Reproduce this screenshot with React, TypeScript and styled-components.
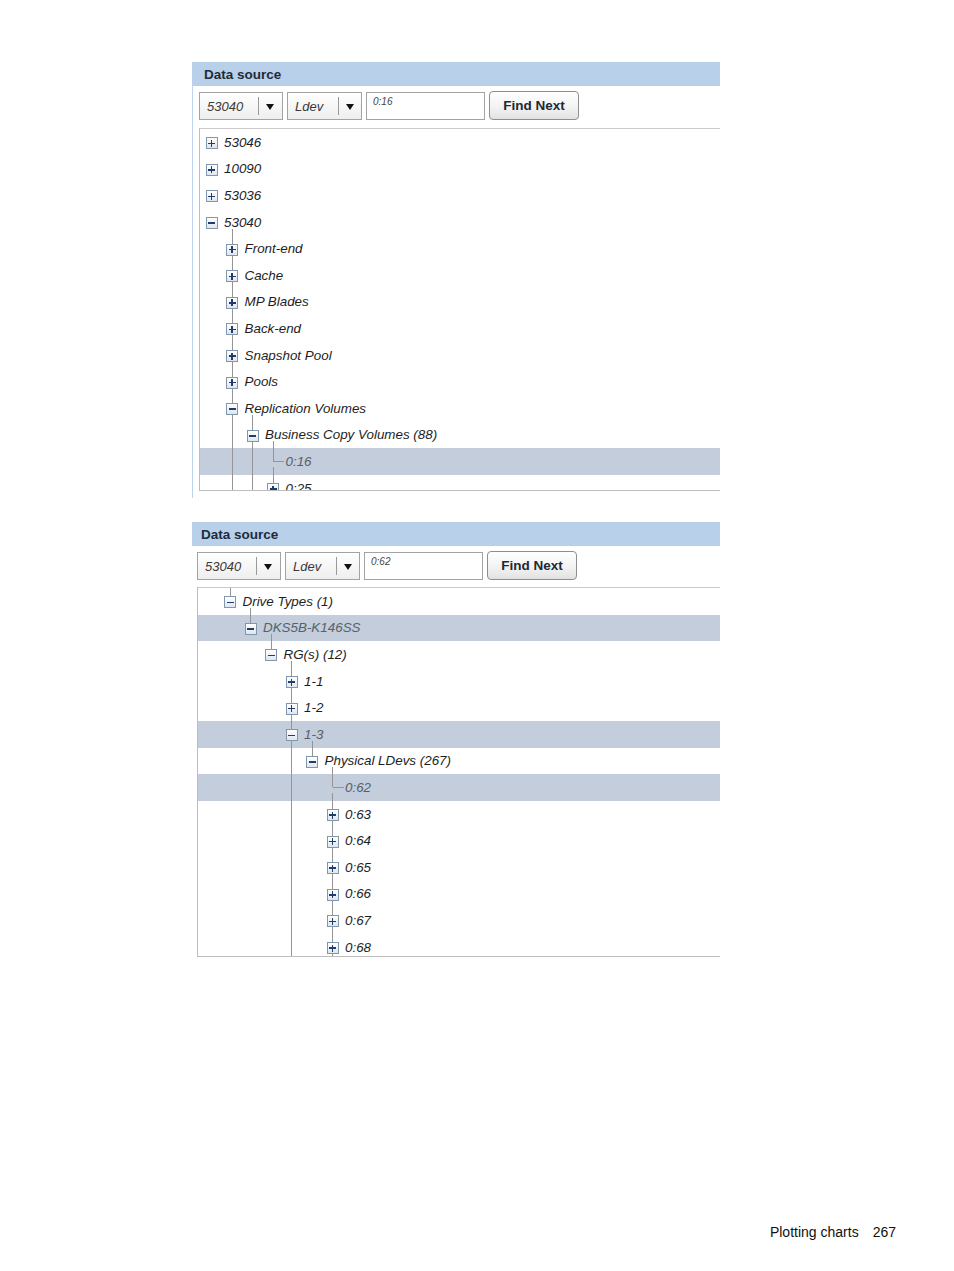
import React from "react";
import styled, { createGlobalStyle, css } from "styled-components";

const GlobalStyle = createGlobalStyle`
  html, body { margin: 0; padding: 0; background: #ffffff; }
  body { font-family: "Liberation Sans", Arial, sans-serif; }
  * { box-sizing: border-box; }
`;

const W = 20.5;
const H = 26.6;
const C = H / 2;
const ICON = 12;
const col = (d: number) => 11.5 + d * W;

type Seg =
  | { kind: "v"; x: number; from: number; to: number }
  | { kind: "h"; x: number; y: number; w: number };

const up = (d: number): Seg => ({ kind: "v", x: col(d), from: 0, to: C - ICON / 2 + 1 });
const down = (d: number): Seg => ({ kind: "v", x: col(d), from: C + ICON / 2, to: H });
const full = (d: number): Seg => ({ kind: "v", x: col(d), from: 0, to: H });
const stub = (d: number): Seg => ({ kind: "v", x: col(d), from: C + 6.5, to: H });
const elbowV = (d: number): Seg => ({ kind: "v", x: col(d), from: 0, to: C });
const elbowH = (d: number): Seg => ({ kind: "h", x: col(d), y: C, w: 11 });
const after = (d: number): Seg => ({ kind: "v", x: col(d), from: C + 6, to: H });

type Kind = "plus" | "minus" | "leaf";
interface Node {
  d: number;
  k: Kind;
  label: string;
  sel?: boolean;
  segs: Seg[];
}

const tree1: Node[] = [
  { d: 0, k: "plus", label: "53046", segs: [] },
  { d: 0, k: "plus", label: "10090", segs: [] },
  { d: 0, k: "plus", label: "53036", segs: [] },
  { d: 0, k: "minus", label: "53040", segs: [stub(1)] },
  ...["Front-end", "Cache", "MP Blades", "Back-end", "Snapshot Pool", "Pools"].map(
    (l): Node => ({ d: 1, k: "plus", label: l, segs: [up(1), down(1)] })
  ),
  { d: 1, k: "minus", label: "Replication Volumes", segs: [up(1), down(1), stub(2)] },
  { d: 2, k: "minus", label: "Business Copy Volumes (88)", segs: [full(1), up(2), down(2), stub(3)] },
  { d: 3, k: "leaf", label: "0:16", sel: true, segs: [full(1), full(2), elbowV(3), elbowH(3), after(3)] },
  { d: 3, k: "plus", label: "0:25", segs: [full(1), full(2), up(3), down(3)] },
];

const tree2: Node[] = [
  { d: 1, k: "minus", label: "Drive Types (1)", segs: [up(1), stub(2)] },
  { d: 2, k: "minus", label: "DKS5B-K146SS", sel: true, segs: [up(2), stub(3)] },
  { d: 3, k: "minus", label: "RG(s) (12)", segs: [up(3), stub(4)] },
  { d: 4, k: "plus", label: "1-1", segs: [up(4), down(4)] },
  { d: 4, k: "plus", label: "1-2", segs: [up(4), down(4)] },
  { d: 4, k: "minus", label: "1-3", sel: true, segs: [up(4), down(4), stub(5)] },
  { d: 5, k: "minus", label: "Physical LDevs (267)", segs: [full(4), up(5), stub(6)] },
  { d: 6, k: "leaf", label: "0:62", sel: true, segs: [full(4), elbowV(6), elbowH(6), after(6)] },
  ...["0:63", "0:64", "0:65", "0:66", "0:67", "0:68"].map(
    (l): Node => ({ d: 6, k: "plus", label: l, segs: [full(4), up(6), down(6)] })
  ),
];

/* ---------- layout ---------- */

const Page = styled.div`
  width: 954px;
  height: 1271px;
  display: flex;
  flex-direction: column;
  padding: 62px 0 31px 192px;
`;

const Panel = styled.section<{ $gapAfter?: number }>`
  width: 528px;
  margin-bottom: ${(p) => p.$gapAfter ?? 0}px;
`;

const Header = styled.div<{ $pad: number }>`
  height: 24px;
  background: #b9d0ea;
  display: flex;
  align-items: center;
  padding-left: ${(p) => p.$pad}px;
  font-weight: bold;
  font-size: 13.5px;
  color: #1d2c3c;
  padding-top: 1px;
`;

const Body = styled.div<{ $rail: boolean; $pad: number; $bottom: number }>`
  padding-left: ${(p) => p.$pad}px;
  padding-top: 6px;
  padding-bottom: ${(p) => p.$bottom}px;
  ${(p) =>
    p.$rail &&
    css`
      border-left: 1px solid #bdd3ee;
    `}
`;

const Toolbar = styled.div<{ $gap: number }>`
  display: flex;
  align-items: flex-start;
  gap: 4px;
  height: 29px;
  margin-bottom: ${(p) => p.$gap}px;
`;

const Combo = styled.div<{ $w: number }>`
  width: ${(p) => p.$w}px;
  height: 28px;
  border: 1px solid #a3a3a3;
  background: linear-gradient(#ffffff, #eeeeee);
  display: flex;
  align-items: center;
  font-style: italic;
  font-size: 13px;
  color: #3a3a3a;
  padding-left: 7px;
`;

const ComboText = styled.span<{ $w: number }>`
  width: ${(p) => p.$w}px;
`;

const ComboDivider = styled.span`
  width: 1px;
  height: 18px;
  background: #9a9a9a;
`;

const Arrow = styled.span`
  margin-left: 7px;
  width: 0;
  height: 0;
  border-left: 4px solid transparent;
  border-right: 4px solid transparent;
  border-top: 6px solid #111;
  margin-top: 2px;
`;

const Input = styled.div`
  width: 119px;
  height: 28px;
  border: 1px solid #a3a3a3;
  background: #fff;
  font-style: italic;
  font-size: 10px;
  color: #444;
  padding: 3px 0 0 6px;
`;

const Button = styled.div`
  width: 90px;
  height: 29px;
  margin-top: -1px;
  border: 1px solid #8e8e8e;
  border-radius: 4px;
  background: linear-gradient(#ffffff 0%, #f3f3f3 55%, #e2e2e2 100%);
  display: flex;
  align-items: center;
  justify-content: center;
  font-weight: bold;
  font-size: 13.5px;
  color: #202a33;
`;

const TreeBox = styled.div<{ $h: number }>`
  height: ${(p) => p.$h}px;
  border-top: 1px solid #cacaca;
  border-left: 1px solid #bdbdbd;
  border-bottom: 1px solid #bdbdbd;
  overflow: hidden;
`;

const Row = styled.div<{ $d: number; $sel?: boolean }>`
  position: relative;
  height: ${H}px;
  display: flex;
  align-items: center;
  padding-left: ${(p) => p.$d * W}px;
  background: ${(p) => (p.$sel ? "#c3cddb" : "transparent")};
  font-style: italic;
  font-size: 13.4px;
  color: ${(p) => (p.$sel ? "#57616c" : "#1e1e1e")};
`;

const VLine = styled.span<{ $x: number; $from: number; $to: number }>`
  position: absolute;
  left: ${(p) => p.$x - 0.5}px;
  top: ${(p) => p.$from}px;
  height: ${(p) => p.$to - p.$from}px;
  width: 1px;
  background: #959595;
`;

const HLine = styled.span<{ $x: number; $y: number; $w: number }>`
  position: absolute;
  left: ${(p) => p.$x}px;
  top: ${(p) => p.$y - 0.5}px;
  width: ${(p) => p.$w}px;
  height: 1px;
  background: #959595;
`;

const NodeCell = styled.span`
  width: 23px;
  height: 100%;
  display: flex;
  align-items: center;
  justify-content: center;
  position: relative;
  z-index: 1;
`;

const Toggle = styled.span<{ $kind: Kind }>`
  position: relative;
  width: ${ICON}px;
  height: ${ICON}px;
  margin-top: 2px;
  border: 1px solid #8397ac;
  background: linear-gradient(#ffffff, #dfe6ee);
  &::before {
    content: "";
    position: absolute;
    left: 1.5px;
    right: 1.5px;
    top: 4.25px;
    height: 1.5px;
    background: #1d3e6c;
  }
  ${(p) =>
    p.$kind === "plus" &&
    css`
      &::after {
        content: "";
        position: absolute;
        top: 1.5px;
        bottom: 1.5px;
        left: 4.25px;
        width: 1.5px;
        background: #1d3e6c;
      }
    `}
`;

const Label = styled.span`
  margin-left: 1px;
  white-space: nowrap;
  position: relative;
  z-index: 1;
`;

const Footer = styled.footer`
  margin-top: auto;
  align-self: flex-end;
  margin-right: 58px;
  display: flex;
  gap: 14px;
  font-family: "Liberation Sans", Arial, sans-serif;
  font-size: 14px;
  line-height: 16px;
  color: #111;
`;

/* ---------- components ---------- */

function Tree({ nodes, height }: { nodes: Node[]; height: number }) {
  return (
    <TreeBox $h={height}>
      {nodes.map((n, i) => (
        <Row key={i} $d={n.d} $sel={n.sel}>
          {n.segs.map((s, j) =>
            s.kind === "v" ? (
              <VLine key={j} $x={s.x} $from={s.from} $to={s.to} />
            ) : (
              <HLine key={j} $x={s.x} $y={s.y} $w={s.w} />
            )
          )}
          <NodeCell>{n.k !== "leaf" && <Toggle $kind={n.k} />}</NodeCell>
          <Label>{n.label}</Label>
        </Row>
      ))}
    </TreeBox>
  );
}

function DataSource({
  search,
  nodes,
  treeHeight,
  rail,
  headerPad,
  bodyPad,
  bottom,
  toolGap,
  gapAfter,
}: {
  search: string;
  nodes: Node[];
  treeHeight: number;
  rail: boolean;
  headerPad: number;
  bodyPad: number;
  bottom: number;
  toolGap: number;
  gapAfter?: number;
}) {
  return (
    <Panel $gapAfter={gapAfter}>
      <Header $pad={headerPad}>Data source</Header>
      <Body $rail={rail} $pad={bodyPad} $bottom={bottom}>
        <Toolbar $gap={toolGap}>
          <Combo $w={84}>
            <ComboText $w={51}>53040</ComboText>
            <ComboDivider />
            <Arrow />
          </Combo>
          <Combo $w={75}>
            <ComboText $w={43}>Ldev</ComboText>
            <ComboDivider />
            <Arrow />
          </Combo>
          <Input>{search}</Input>
          <Button>Find Next</Button>
        </Toolbar>
        <Tree nodes={nodes} height={treeHeight} />
      </Body>
    </Panel>
  );
}

export default function App() {
  return (
    <>
      <GlobalStyle />
      <Page>
        <DataSource
          search="0:16"
          nodes={tree1}
          treeHeight={363}
          rail
          headerPad={12}
          bodyPad={6}
          bottom={7}
          toolGap={7}
          gapAfter={24}
        />
        <DataSource
          search="0:62"
          nodes={tree2}
          treeHeight={370}
          rail={false}
          headerPad={9}
          bodyPad={5}
          bottom={0}
          toolGap={6}
        />
        <Footer>
          <span>Plotting charts</span>
          <span>267</span>
        </Footer>
      </Page>
    </>
  );
}
